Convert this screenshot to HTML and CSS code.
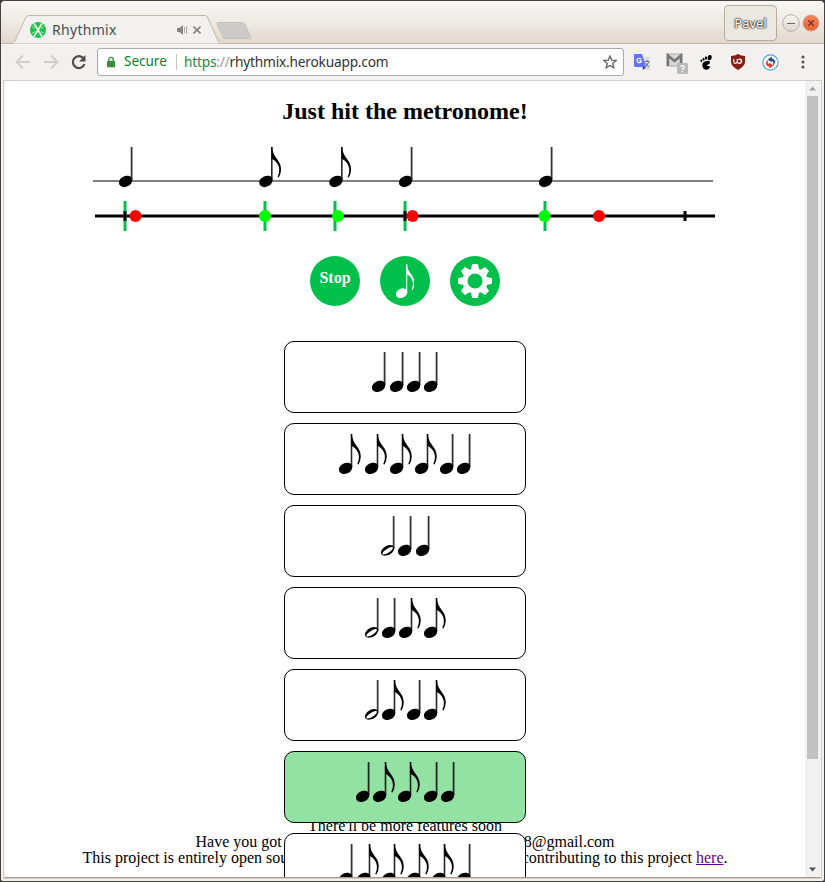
FILE: index.html
```
<!DOCTYPE html>
<html lang="en">
<head>
<meta charset="utf-8">
<title>Rhythmix</title>
<link rel="stylesheet" href="styles.css">
</head>
<body>
<svg class="defs" width="0" height="0" aria-hidden="true">
  <symbol id="quarter" viewBox="0 0 13.3 40" overflow="visible">
    <ellipse cx="6.6" cy="34.4" rx="7.1" ry="5.3" transform="rotate(-27 6.6 34.4)"/>
    <rect x="11.7" y="0" width="1.8" height="33" opacity=".8"/>
  </symbol>
  <symbol id="eighth" viewBox="0 0 21.2 40" overflow="visible">
    <ellipse cx="6.6" cy="34.4" rx="7.1" ry="5.3" transform="rotate(-27 6.6 34.4)"/>
    <rect x="11.7" y="0" width="1.6" height="33" opacity=".85"/>
    <path d="M11.9 0H13C13.2 11 21.600 12 21.800 22.500Q21.700 27 19.400 30.600L18.300 30Q20.300 26 19.900 22C19.300 16 14.500 12.500 12.500 12Z"/>
  </symbol>
  <symbol id="half" viewBox="0 0 13.3 40" overflow="visible">
    <path fill-rule="evenodd" d="M0 37.300C-.7 33.500 4.500 29.100 9 28.900C13.200 28.800 14.200 32 12.300 35C10 39.500 .9 41.700 0 37.300ZM1.500 38C3 40 10.500 35.500 11.900 32.500C12.800 30.500 10 30.600 7.500 32.100C4.500 33.700 .7 36.700 1.500 38Z"/>
    <rect x="11.8" y="0" width="1.7" height="33" opacity=".8"/>
  </symbol>
</svg>

<div class="window">
  <header class="titlebar">
    <svg class="tabs" width="260" height="29" viewBox="0 0 260 29">
      <path class="tab-shape" d="M0 28.500H10.500L13 26L23.500 3Q24.500 .500 27 .500H203Q205 .500 206 3L216.500 27L218 28.500"/>
      <path class="new-tab" d="M216 7.500H240Q242 7.500 243 9L248.500 22Q249 23.500 247 23.500H224Q222 23.500 221 22L215 9Q214.500 7.500 216 7.500Z"/>
    </svg>
    <div class="tab-content">
      <svg width="16" height="16" viewBox="0 0 16 16"><circle cx="8" cy="8" r="8" fill="#1fbf4b"/><path d="M4 1.500L12 14.500M12 1.500L4 14.500" stroke="#e9fff0" stroke-width="1.700"/><path d="M2 4.500L5 6.500M14 4.500L11 6.500M2 11.500L5 9.500M14 11.500L11 9.500" stroke="#a9e8ba"/></svg>
      <span class="tab-title">Rhythmix</span>
      <svg width="11" height="12" viewBox="0 0 11 12"><path d="M0 4H2.500L6 1V11L2.500 8H0Z" fill="#858585"/><path d="M7.500 3V9M9.500 2V10" stroke="#aaa"/></svg>
      <svg class="tab-close" width="8" height="8" viewBox="0 0 8 8"><path d="M.5 .5L7.500 7.500M7.500 .5L.5 7.500" stroke="#858585" stroke-width="1.600"/></svg>
    </div>
    <div class="controls">
      <span class="user">Pavel</span>
      <svg width="38" height="18" viewBox="0 0 38 18"><defs><linearGradient id="gm" x2="0" y2="1"><stop stop-color="#f7f5f2"/><stop offset="1" stop-color="#dcd6ce"/></linearGradient><linearGradient id="gc" x2="0" y2="1"><stop stop-color="#f8845e"/><stop offset="1" stop-color="#ed5f33"/></linearGradient></defs><circle cx="9" cy="9" r="8.300" fill="url(#gm)" stroke="#b8afa3"/><path d="M5 9.500H13" stroke="#6e6961"/><circle cx="29" cy="9" r="8" fill="url(#gc)" stroke="#c9a58f"/><path d="M26.300 6.300L31.700 11.700M31.700 6.300L26.300 11.700" stroke="#713520" stroke-width="1.300"/></svg>
    </div>
  </header>

  <div class="toolbar">
    <svg class="nav" width="74" height="16" viewBox="0 0 74 16" fill="none">
      <path d="M15 8H2M8 1.500L1.500 8L8 14.500M29 8H42M36 1.500L42.500 8L36 14.500" stroke="#cecece" stroke-width="2"/>
      <path d="M68.500 4.200A6 6 0 1 0 69.500 10.200" stroke="#4c4c4c" stroke-width="2.200"/><path d="M70.500 1V7.500H64Z" fill="#4c4c4c"/>
    </svg>
    <div class="omnibox">
      <svg width="8" height="12" viewBox="0 0 9 12"><rect y="4.500" width="9" height="7.500" rx="1" fill="#388e3c"/><path d="M2 5V3.300A2.500 2.500 0 0 1 7 3.300V5" fill="none" stroke="#388e3c" stroke-width="1.400"/></svg>
      <span class="secure">Secure</span><i class="divider"></i>
      <span class="url"><b>https</b><em>://</em>rhythmix.herokuapp.com</span>
      <svg class="star" width="14" height="14" viewBox="0 0 14 14"><path d="M7 1L8.700 5.100L13.200 5.500L9.800 8.500L10.800 12.800L7 10.500L3.200 12.800L4.200 8.500L.8 5.500L5.300 5.100Z" fill="none" stroke="#686868" stroke-width="1.400"/></svg>
    </div>
    <div class="extensions">
      <svg width="17" height="17" viewBox="0 0 17 17"><path d="M6 3H16V16H10Z" fill="#dcdcdc"/><path d="M0 0H8L12 13H1.500Q0 13 0 11.500Z" fill="#6470f5"/><path d="M8.500 13H12L9 16Z" fill="#4b22bd"/><path d="M7 5.300A2.200 2.200 0 1 0 7.300 7H5.200" fill="none" stroke="#fff" stroke-width="1.200"/><path d="M10.500 7.500H15.500M13 6V8M11 13Q14 11 14.500 8M11.500 9Q12.500 11.500 15 13" fill="none" stroke="#687b86"/></svg>
      <svg class="mail" width="23" height="22" viewBox="0 0 23 22"><rect x="1" y="1" width="15" height="12" fill="#d8d8d8" stroke="#aaa"/><path d="M2 13V2.500L8.500 8L15 2.500V13" fill="none" stroke="#777" stroke-width="2.500"/><rect x="11" y="10" width="11" height="11" rx="1" fill="#bababa"/><path d="M14.800 14.200Q15 12.700 16.500 12.700Q18.300 12.700 18 14.300Q17.800 15.300 16.500 16V17M16.500 18V19.300" fill="none" stroke="#fff" stroke-width="1.300"/></svg>
      <svg class="foot" width="13" height="15" viewBox="0 0 13 15"><ellipse cx="9.700" cy="2.600" rx="2" ry="2.700" transform="rotate(15 9.700 2.600)"/><ellipse cx="6" cy="3" rx="1.100" ry="1.700"/><ellipse cx="3.500" cy="4.200" rx="1" ry="1.500"/><ellipse cx="1.300" cy="5.800" rx=".9" ry="1.400" transform="rotate(-15 1.300 5.800)"/><path d="M6.500 6C10.500 5 11 8.500 8 9.500C6.500 10.200 7 11 8 11C10 10.500 10.500 12.500 9 13.700C7 15.500 3.500 15 2.700 12C1.500 9 3 6.500 6.500 6Z"/></svg>
      <svg class="shield" width="14" height="16" viewBox="0 0 14 16"><path d="M7 0Q10 2 14 2V8Q14 12 7 16Q0 12 0 8V2Q4 2 7 0Z" fill="#861c12"/><path d="M2.700 5V7.500Q2.700 9.300 4.500 9.300Q6.300 9.300 6.300 7.500V5M6.300 7.200A2.200 2.200 0 1 0 7.300 5.400M9 7.200H9.800" fill="none" stroke="#fff" stroke-width="1.200"/></svg>
      <svg class="sync" width="17" height="17" viewBox="0 0 17 17"><circle cx="8.500" cy="8.500" r="7.600" fill="#fff" stroke="#50a9c6" stroke-width="1.200"/><path d="M9.500 3L6 5.500L9.500 8V6.400Q12.300 7 11.300 11Q15.500 6 9.500 4.500Z" fill="#174d83" stroke="#174d83" stroke-width=".5"/><path d="M7.500 14L11 11.500L7.500 9V10.600Q4.700 10 5.700 6Q1.500 11 7.500 12.500Z" fill="#e3312b" stroke="#e3312b" stroke-width=".5"/></svg>
      <svg class="menu" width="4" height="14" viewBox="0 0 4 14" fill="#555"><circle cx="2" cy="2" r="1.600"/><circle cx="2" cy="7" r="1.600"/><circle cx="2" cy="12" r="1.600"/></svg>
    </div>
  </div>

  <div class="viewport">
    <main class="page">
      <h1>Just hit the metronome!</h1>
      <svg class="timeline" width="630" height="90" viewBox="90 145 630 90">
        <path d="M93 181H713" stroke="#808080" stroke-width="2"/>
        <use href="#quarter" x="119" y="147" width="13.300" height="40"/>
        <use href="#eighth" x="259.300" y="147" width="21.200" height="40"/>
        <use href="#eighth" x="329.300" y="147" width="21.200" height="40"/>
        <use href="#quarter" x="399" y="147" width="13.300" height="40"/>
        <use href="#quarter" x="539" y="147" width="13.300" height="40"/>
        <path d="M95 216H715" stroke="#000" stroke-width="3"/>
        <path d="M125 201V231M265 201V231M335 201V231M405 201V231M545 201V231" stroke="#00bf4b" stroke-width="3"/>
        <path d="M125 211V221M405 211V221M685 211V221" stroke="#000" stroke-width="3"/>
        <g fill="red"><circle cx="135.500" cy="216" r="6"/><circle cx="412.500" cy="216" r="6"/><circle cx="599" cy="216" r="6"/></g>
        <g fill="lime"><circle cx="265" cy="216" r="6"/><circle cx="338" cy="216" r="6"/><circle cx="544.500" cy="216" r="6"/></g>
      </svg>
      <div class="buttons">
        <span class="round stop">Stop</span>
        <span class="round"><svg width="18" height="34" viewBox="0 0 21.200 40" fill="#fff"><use href="#eighth" width="21.200" height="40"/></svg></span>
        <span class="round"><svg width="34" height="34" viewBox="-17 -17 34 34"><defs><path id="tooth" d="M-4.500 -10L-2.800 -17H2.800L4.500 -10Z"/></defs><g fill="#fff"><use href="#tooth"/><use href="#tooth" transform="rotate(45)"/><use href="#tooth" transform="rotate(90)"/><use href="#tooth" transform="rotate(135)"/><use href="#tooth" transform="rotate(180)"/><use href="#tooth" transform="rotate(225)"/><use href="#tooth" transform="rotate(270)"/><use href="#tooth" transform="rotate(315)"/></g><circle r="10" fill="none" stroke="#fff" stroke-width="5"/></svg></span>
      </div>
      <div class="rhythms">
        <div class="card"><svg class="q"><use href="#quarter"/></svg><svg class="q"><use href="#quarter"/></svg><svg class="q"><use href="#quarter"/></svg><svg class="q"><use href="#quarter"/></svg></div>
        <div class="card"><svg class="e"><use href="#eighth"/></svg><svg class="e"><use href="#eighth"/></svg><svg class="e"><use href="#eighth"/></svg><svg class="e"><use href="#eighth"/></svg><svg class="q"><use href="#quarter"/></svg><svg class="q"><use href="#quarter"/></svg></div>
        <div class="card"><svg class="q"><use href="#half"/></svg><svg class="q"><use href="#quarter"/></svg><svg class="q"><use href="#quarter"/></svg></div>
        <div class="card"><svg class="q"><use href="#half"/></svg><svg class="q"><use href="#quarter"/></svg><svg class="e"><use href="#eighth"/></svg><svg class="e"><use href="#eighth"/></svg></div>
        <div class="card"><svg class="q"><use href="#half"/></svg><svg class="e"><use href="#eighth"/></svg><svg class="q"><use href="#quarter"/></svg><svg class="e"><use href="#eighth"/></svg></div>
        <div class="card selected"><svg class="q"><use href="#quarter"/></svg><svg class="e"><use href="#eighth"/></svg><svg class="e"><use href="#eighth"/></svg><svg class="q"><use href="#quarter"/></svg><svg class="q"><use href="#quarter"/></svg></div>
        <div class="card"><svg class="q"><use href="#quarter"/></svg><svg class="e"><use href="#eighth"/></svg><svg class="e"><use href="#eighth"/></svg><svg class="e"><use href="#eighth"/></svg><svg class="e"><use href="#eighth"/></svg><svg class="q"><use href="#quarter"/></svg></div>
      </div>
      <footer>
        <p class="soon">There'll be more features soon</p>
        <p class="contact"><span>Have you got</span><span>8@gmail.com</span></p>
        <p class="source"><span>This project is entirely open sou</span><span>contributing to this project <a href="#">here</a>.</span></p>
      </footer>
    </main>
    <div class="scrollbar">
      <svg width="15" height="15" viewBox="0 0 15 15"><path d="M4 9.500L7.500 5.500L11 9.500Z" fill="#a3a3a3"/></svg>
      <i class="thumb"></i>
      <svg width="15" height="15" viewBox="0 0 15 15"><path d="M4 5.500L7.500 9.500L11 5.500Z" fill="#505050"/></svg>
    </div>
  </div>
</div>
</body>
</html>
```
FILE: styles.css
```
* { box-sizing: border-box; }
html, body { margin: 0; height: 100%; overflow: hidden; }
body { background: #3c3b37; font-family: "Liberation Serif", serif; font-size: 16px; }
svg { display: block; flex: none; }
.defs { position: absolute; }

.window {
  height: 882px;
  display: flex;
  flex-direction: column;
  border: 1px solid #45413d;
  border-radius: 5px 5px 3px 3px;
  background: #f2f1f0;
  overflow: hidden;
}
.titlebar {
  height: 43px;
  flex: none;
  display: flex;
  position: relative;
  justify-content: space-between;
  background: linear-gradient(#f8f7f5, #eeeae4 50%, #dfd7cc);
  border-bottom: 1px solid #c3b8a8;
  font-family: "Noto Sans", sans-serif;
}
.tabs { margin: 14px 0 0 1px; }
.tab-shape { fill: #f2f1f0; stroke: #c3b8a8; }
.new-tab { fill: #cdcbc9; stroke: #c9c1b6; }
.tab-content {
  position: absolute;
  left: 29px;
  top: 21px;
  width: 171px;
  height: 16px;
  display: flex;
  align-items: center;
}
.tab-title { margin: -2px auto 0 6px; font-size: 14px; letter-spacing: .3px; color: #4c4c4c; }
.tab-close { margin-left: 5px; }
.controls { display: flex; align-items: center; gap: 5px; margin: 2px 4px 0 0; }
.user {
  width: 53px;
  height: 36px;
  border: 1px solid #b8ad9c;
  border-radius: 4px;
  background: #ebe7e1;
  color: #fff;
  font-size: 13px;
  line-height: 34px;
  text-align: center;
  text-shadow: 0 0 2px #222, 0 0 2px #222, 0 0 1px #222;
}

.toolbar {
  height: 37px;
  flex: none;
  margin: 0 4px;
  display: flex;
  align-items: center;
  border-bottom: 1px solid #cfcdcb;
  font-family: "Noto Sans", sans-serif;
}
.nav { margin-left: 10px; }
.omnibox {
  width: 527px;
  height: 28px;
  margin-left: 8px;
  padding: 0 6px 0 9px;
  display: flex;
  align-items: center;
  border: 1px solid #a9a9a9;
  border-radius: 3px;
  background: #fff;
  font-size: 14px;
  color: #333;
}
.secure { width: 44px; margin: -2px 0 0 9px; color: #0b8034; font-size: 13.500px; white-space: nowrap; }
.divider { width: 1px; height: 16px; margin: 0 7px 0 8px; background: #c4c4c4; }
.url { margin-top: -2px; white-space: nowrap; font-size: 13.700px; letter-spacing: -.2px; }
.url b { font-weight: 400; color: #1b8a3e; }
.url em { font-style: normal; color: #999; }
.star { margin-left: auto; }
.extensions { margin-left: 10px; display: flex; align-items: center; }
.mail { margin: 4px 0 0 15px; }
.foot { margin-left: 11px; }
.shield { margin-left: 18px; }
.sync { margin-left: 17px; }
.menu { margin-left: 22px; }

.viewport {
  height: 797px;
  flex: none;
  margin: 0 3px;
  display: flex;
  border: 1px solid #f2f1f0;
  border-width: 0 1px;
  border-bottom: 1px solid #a09a93;
  outline: 1px solid #d4cec6;
}
.page {
  position: relative;
  z-index: 0;
  width: 800px;
  flex: none;
  overflow: hidden;
  background: #fff;
}
h1 { margin: 17px 0 20px; font-size: 24px; line-height: 27px; text-align: center; }
.timeline { margin-left: 85px; }
.buttons { display: flex; justify-content: center; gap: 20px; margin-top: 21px; }
.round {
  width: 50px;
  height: 50px;
  display: grid;
  place-items: center;
  border-radius: 50%;
  background: #00bf4b;
  color: #fff;
}
.stop { padding-bottom: 7px; font-weight: 700; }
.rhythms {
  display: flex;
  flex-direction: column;
  align-items: center;
  gap: 10px;
  height: 536px;
  margin-top: 35px;
  overflow: hidden;
}
.card {
  width: 242px;
  height: 72px;
  flex: none;
  display: flex;
  justify-content: center;
  gap: 4px;
  padding-top: 10px;
  border: 1px solid #000;
  border-radius: 10px;
  background: #fff;
}
.card svg { overflow: visible; }
.selected { background: #93e2a4; }
.q { width: 13.300px; height: 40px; }
.e { width: 21.200px; height: 40px; }
footer { position: absolute; z-index: -1; left: 0; right: 0; bottom: 11px; line-height: 16px; }
footer p { margin: 0 auto; display: flex; justify-content: space-between; white-space: nowrap; }
.soon { width: 194px; }
.contact { width: 419px; }
.source { width: 645px; }
footer a { color: #660099; }

.scrollbar { width: 15px; display: flex; flex-direction: column; background: #f1f1f1; }
.thumb { width: 11px; height: 663px; margin: 0 2px auto; background: #c1c1c1; }
```
